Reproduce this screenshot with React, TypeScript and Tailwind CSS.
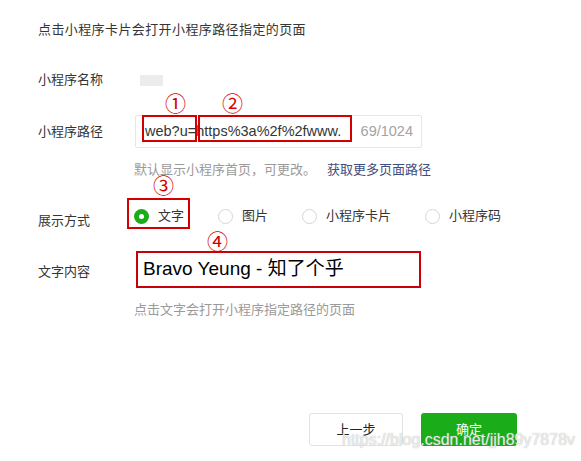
const Radio = ({ checked, label }: { checked?: boolean; label: string }) => (
  <div className="flex items-center gap-[9px]">
    {checked ? (
      <span className="flex h-[15px] w-[15px] items-center justify-center rounded-full bg-[#1aad19]">
        <span className="h-[5px] w-[5px] rounded-full bg-white" />
      </span>
    ) : (
      <span className="h-[15px] w-[15px] rounded-full border border-[#d6d6d6] bg-white" />
    )}
    <span className="text-[13px] text-[#353535]">{label}</span>
  </div>
);

const Mark = ({ n, className }: { n: string; className: string }) => (
  <span
    className={`absolute text-[21px] leading-none text-[#d40000] font-['Noto_Sans_CJK_SC',sans-serif] ${className}`}
  >
    {n}
  </span>
);

export default function App() {
  return (
    <div className="relative h-[461px] w-[581px] overflow-hidden bg-white font-['Liberation_Sans','Noto_Sans_CJK_SC',sans-serif] text-[#353535]">
      <div className="flex flex-col pl-[38px] pt-[20px]">
        <p className="h-[20px] text-[13px] leading-[20px] tracking-[0.4px] text-[#353535]">
          点击小程序卡片会打开小程序路径指定的页面
        </p>

        <div className="mt-[30px] flex h-[20px] items-center">
          <span className="w-[96px] text-[13px] leading-[20px]">小程序名称</span>
          <span className="ml-[6px] h-[11px] w-[23px] bg-[#ececec]" />
        </div>

        <div className="mt-[25px] flex h-[33px] items-center">
          <span className="w-[96px] text-[13px] leading-[20px]">小程序路径</span>
          <div className="ml-[1px] flex h-[33px] w-[287px] items-center rounded-[2px] border border-[#e6e6e6] pl-[9px] pr-[8px]">
            <span className="flex-1 overflow-hidden whitespace-nowrap text-[14.5px] text-[#353535]">
              web?u=https%3a%2f%2fwww.
            </span>
            <span className="ml-[6px] text-[14.5px] text-[#a3a3a3]">69/1024</span>
          </div>
        </div>

        <p className="ml-[96px] mt-[12px] h-[20px] text-[13px] leading-[20px] text-[#9a9a9a]">
          默认显示小程序首页，可更改。
          <span className="ml-[11px] text-[#3f4e7e]">获取更多页面路径</span>
        </p>

        <div className="mt-[26px] flex h-[20px] items-center">
          <span className="w-[96px] pt-[10px] text-[13px] leading-[20px]">展示方式</span>
          <div className="flex items-center gap-[34px]">
            <Radio checked label="文字" />
            <Radio label="图片" />
            <Radio label="小程序卡片" />
            <Radio label="小程序码" />
          </div>
        </div>

        <div className="mt-[25px] flex h-[37px] items-center">
          <span className="w-[96px] pt-[5px] text-[13px] leading-[20px]">文字内容</span>
          <div className="ml-[2px] flex h-[37px] w-[285px] items-center border-2 border-[#c8000a] pl-[5px]">
            <span className="text-[19px] text-black">Bravo Yeung - 知了个乎</span>
          </div>
        </div>

        <p className="ml-[96px] mt-[12px] h-[20px] text-[13px] leading-[20px] text-[#9a9a9a]">
          点击文字会打开小程序指定路径的页面
        </p>

        <div className="ml-[271px] mt-[93px] flex gap-[18px]">
          <button className="h-[33px] w-[94px] rounded-[3px] border border-[#e3e3e3] bg-white text-[13px] text-[#222]">
            上一步
          </button>
          <button className="h-[33px] w-[96px] rounded-[3px] bg-[#1aad19] text-[13px] text-white">
            确定
          </button>
        </div>
      </div>

      {/* annotations */}
      <div className="absolute left-[142px] top-[115px] h-[27px] w-[55px] border-2 border-[#d40000]" />
      <div className="absolute left-[198px] top-[115px] h-[27px] w-[154px] border-2 border-[#d40000]" />
      <div className="absolute left-[127px] top-[198px] h-[31px] w-[63px] border-2 border-[#d40000]" />
      <Mark n="①" className="left-[165px] top-[92px]" />
      <Mark n="②" className="left-[222px] top-[92px]" />
      <Mark n="③" className="left-[153px] top-[174px]" />
      <Mark n="④" className="left-[207px] top-[230px]" />

      <span className="absolute left-[342px] top-[430px] whitespace-nowrap text-[16px] leading-[20px] text-white/80 [text-shadow:0_0_1px_#9a9a9a]">
        https://blog.csdn.net/jjh89y7878v
      </span>
    </div>
  );
}
